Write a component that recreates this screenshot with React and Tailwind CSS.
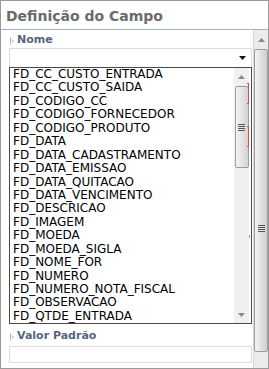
import React from "react";

const items = [
  "FD_CC_CUSTO_ENTRADA",
  "FD_CC_CUSTO_SAIDA",
  "FD_CODIGO_CC",
  "FD_CODIGO_FORNECEDOR",
  "FD_CODIGO_PRODUTO",
  "FD_DATA",
  "FD_DATA_CADASTRAMENTO",
  "FD_DATA_EMISSAO",
  "FD_DATA_QUITACAO",
  "FD_DATA_VENCIMENTO",
  "FD_DESCRICAO",
  "FD_IMAGEM",
  "FD_MOEDA",
  "FD_MOEDA_SIGLA",
  "FD_NOME_FOR",
  "FD_NUMERO",
  "FD_NUMERO_NOTA_FISCAL",
  "FD_OBSERVACAO",
  "FD_QTDE_ENTRADA",
];

function Grip() {
  return (
    <svg width="5" height="8" viewBox="0 0 5 8" className="shrink-0">
      <line x1="0.5" y1="0" x2="0.5" y2="8" stroke="#b8b8b8" strokeWidth="1" />
      <path d="M2 2 L4 4 L2 6 Z" fill="#c8c8c8" />
    </svg>
  );
}

function Up() {
  return (
    <svg width="7" height="4" viewBox="0 0 7 4">
      <path d="M0 4 L3.5 0 L7 4 Z" fill="#8a8a8a" />
    </svg>
  );
}
function Down({ c = "#8a8a8a" }) {
  return (
    <svg width="7" height="4" viewBox="0 0 7 4">
      <path d="M0 0 L3.5 4 L7 0 Z" fill={c} />
    </svg>
  );
}

function GripLines() {
  return (
    <div className="flex flex-col gap-[1px]">
      <div className="w-[7px] h-[1px] bg-[#555]" />
      <div className="w-[7px] h-[1px] bg-[#555]" />
      <div className="w-[7px] h-[1px] bg-[#555]" />
      <div className="w-[7px] h-[1px] bg-[#555]" />
    </div>
  );
}

export default function App() {
  return (
    <div
      className="w-[269px] h-[369px] border border-[#9a9a9a] bg-white flex flex-col overflow-hidden"
      style={{ fontFamily: '"DejaVu Sans", Verdana, sans-serif' }}
    >
      <div className="h-[29px] shrink-0 border-b border-[#a3b1c4] flex items-center pl-[5px] pt-[1px]">
        <span className="text-[14px] font-bold text-[#6b6b6b] leading-none">Definição do Campo</span>
      </div>
      <div className="flex flex-1 min-h-0">
        <div className="flex-1 flex flex-col pl-[8px] pr-[1px] relative">
          <div className="h-[18px] flex items-end pb-[3px] gap-[2px] pl-[1px]">
            <Grip />
            <span className="text-[11px] font-bold text-[#56657d] leading-none">Nome</span>
          </div>
          <div className="h-[19px] border border-[#dcdcdc] border-b-0 flex items-center justify-end pr-[5px]">
            <Down c="#111" />
          </div>
          <div className="h-[257px] border border-[#4a4a4a] flex">
            <div className="flex-1 pl-[3px] text-[12px] text-black">
              {items.map((t) => (
                <div key={t} className="h-[13.44px] leading-[13.44px] whitespace-nowrap">
                  {t}
                </div>
              ))}
            </div>
            <div className="w-[15px] bg-[#f0f0f0] flex flex-col items-center mr-[2px]">
              <div className="h-[18px] flex items-center justify-center">
                <Up />
              </div>
              <div className="h-[82px] w-[14px] border border-[#9c9c9c] rounded-[2px] bg-gradient-to-r from-[#f4f4f4] via-[#e4e4e4] to-[#d4d4d4] flex items-center justify-center">
                <GripLines />
              </div>
              <div className="flex-1" />
              <div className="h-[16px] flex items-center justify-center">
                <Down />
              </div>
            </div>
          </div>
          <div className="h-[22px] flex items-end pb-[5px] gap-[2px] pl-[1px]">
            <Grip />
            <span className="text-[11px] font-bold text-[#56657d] leading-none">Valor Padrão</span>
          </div>
          <div className="h-[17px] border border-[#dcdcdc]" />
          <div className="absolute left-[246px] top-[53px] w-[2px] h-[21px] border-r border-t border-b border-[#e04848]" />
          <div className="absolute left-[246px] top-[96px] w-[2px] h-[21px] border-r border-t border-b border-[#e04848]" />
          <div className="absolute left-[248px] top-[205px] w-[1px] h-[3px] bg-[#8a9ad0]" />
        </div>
        <div className="w-[15px] bg-[#ececec] border-l border-[#d8d8d8] flex flex-col items-center">
          <div className="h-[19px] flex items-center justify-center pt-[1px]">
            <Up />
          </div>
          <div className="h-[303px] w-[14px] border border-[#9c9c9c] rounded-[2px] bg-gradient-to-r from-[#f4f4f4] via-[#e2e2e2] to-[#cfcfcf] flex items-center justify-center pt-[56px]">
            <GripLines />
          </div>
        </div>
      </div>
    </div>
  );
}
